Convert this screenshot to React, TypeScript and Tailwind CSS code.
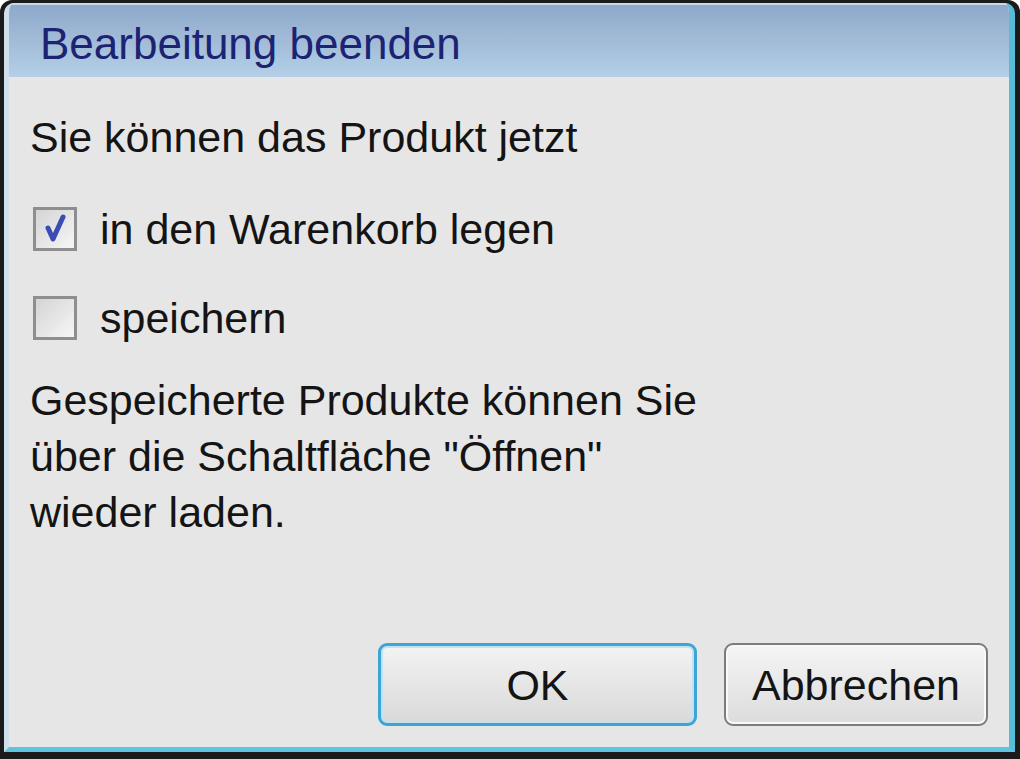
const CheckBox = ({ checked }: { checked: boolean }) => {
    return (
        <div className="w-[44px] h-[44px] shrink-0 border-[3px] border-[#8e8e8e] bg-gradient-to-br from-[#d4d4d4] to-[#f6f6f6] flex items-center justify-center">
            {checked && (
                <svg width="34" height="34" viewBox="0 0 34 34">
                    <path d="M10 16 L15 27 L25 5" fill="none" stroke="#3a4db3" strokeWidth="5" strokeLinecap="round" strokeLinejoin="round" />
                </svg>
            )}
        </div>
    )
}

const App = () => {
    return (
        <div className="w-[1020px] h-[759px] bg-[#1b1b1b] rounded-t-[12px] pt-[3px] pl-[4px] pr-[5px] pb-[7px] font-['Liberation_Sans',Arial,sans-serif]">
            <div className="h-full flex flex-col rounded-t-[10px] overflow-hidden border-l-[5px] border-l-[#cfe0ec] border-r-[6px] border-r-[#56bcd8] border-b-[5px] border-b-[#5fc4de] bg-[#e6e6e6]">
                <div className="h-[74px] shrink-0 flex items-center pl-[31px] bg-gradient-to-b from-[#8fa9ca] to-[#b4cfe6] border-t-[2px] border-t-[#c9d9ea]">
                    <h1 className="text-[44px] leading-none text-[#1c2372] pt-[6px]">Bearbeitung beenden</h1>
                </div>
                <div className="flex-1 flex flex-col pl-[21px] pr-[21px] pt-[32px] pb-[21px] text-[43px] leading-[56px] text-[#141414]">
                    <p>Sie können das Produkt jetzt</p>
                    <label className="flex items-center gap-[23px] mt-[36px] pl-[3px]">
                        <CheckBox checked={true} />
                        <span>in den Warenkorb legen</span>
                    </label>
                    <label className="flex items-center gap-[23px] mt-[33px] pl-[3px]">
                        <CheckBox checked={false} />
                        <span>speichern</span>
                    </label>
                    <p className="mt-[26px]">
                        Gespeicherte Produkte können Sie<br />
                        über die Schaltfläche "Öffnen"<br />
                        wieder laden.
                    </p>
                    <div className="flex-1" />
                    <div className="flex justify-end gap-[27px]">
                        <button className="w-[319px] h-[83px] rounded-[9px] border-[3px] border-[#3fa4d4] shadow-[inset_0_0_0_2px_#bfe3f3] bg-gradient-to-b from-[#f3f3f3] to-[#d9d9d9] text-[43px] text-[#141414]">OK</button>
                        <button className="w-[264px] h-[83px] rounded-[9px] border-[2px] border-[#7c7c7c] shadow-[inset_0_0_0_2px_#f8f8f8] bg-gradient-to-b from-[#f5f5f5] to-[#dcdcdc] text-[43px] text-[#141414]">Abbrechen</button>
                    </div>
                </div>
            </div>
        </div>
    )
}
export default App;
